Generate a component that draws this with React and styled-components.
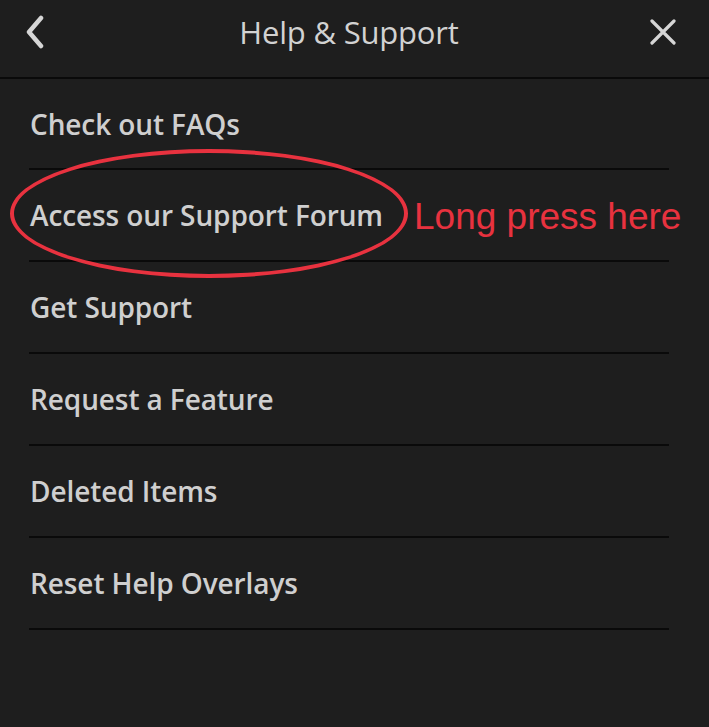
import React from 'react'
import styled, { createGlobalStyle } from 'styled-components'

const GlobalStyle = createGlobalStyle`
  html, body {
    margin: 0;
    padding: 0;
    background: #1e1e1e;
  }
`

const items = [
  'Check out FAQs',
  'Access our Support Forum',
  'Get Support',
  'Request a Feature',
  'Deleted Items',
  'Reset Help Overlays',
]

const App = () => {
  return (
    <Screen>
      <GlobalStyle />
      <Header>
        <IconButton aria-label="back">
          <svg width="22" height="34" viewBox="0 0 22 34">
            <path d="M17 3 L5 17 L17 31" fill="none" stroke="#d6d6d6" strokeWidth="4.5" strokeLinecap="round" strokeLinejoin="round" />
          </svg>
        </IconButton>
        <Title>Help &amp; Support</Title>
        <IconButton aria-label="close">
          <svg width="26" height="26" viewBox="0 0 26 26">
            <path d="M2 2 L24 24 M24 2 L2 24" fill="none" stroke="#d6d6d6" strokeWidth="3.2" strokeLinecap="round" />
          </svg>
        </IconButton>
      </Header>
      <List>
        {items.map((label, index) => (
          <Row key={index}>
            <Label>{label}</Label>
            {index === 1 && (
              <>
                <Circle />
                <Note>Long press here</Note>
              </>
            )}
          </Row>
        ))}
      </List>
    </Screen>
  )
}

export default App

const Screen = styled.div`
  width: 709px;
  height: 727px;
  background: #1e1e1e;
  overflow: hidden;
  font-family: "Open Sans", "Noto Sans", sans-serif;
`

const Header = styled.div`
  height: 79px;
  border-bottom: 2px solid #0a0a0a;
  box-sizing: border-box;
  display: flex;
  align-items: center;
  justify-content: space-between;
  padding: 0 33px 13px 22px;
`

const IconButton = styled.div`
  display: flex;
  align-items: center;
  justify-content: center;
  width: 26px;
  height: 34px;
`

const Title = styled.div`
  color: #d2d2d2;
  font-size: 31px;
  font-weight: 400;
  letter-spacing: -0.2px;
`

const List = styled.div`
  display: flex;
  flex-direction: column;
  padding: 0 40px 0 29px;
`

const Row = styled.div`
  position: relative;
  height: 92px;
  border-bottom: 2px solid #0a0a0a;
  box-sizing: border-box;
  display: flex;
  align-items: center;
  padding-left: 1px;
  &:first-child {
    height: 91px;
  }
`

const Label = styled.div`
  color: #cfcfcf;
  font-size: 28px;
  font-weight: 600;
  letter-spacing: -0.1px;
`

const Circle = styled.div`
  position: absolute;
  left: -19px;
  top: -21px;
  width: 398px;
  height: 129px;
  border: 4px solid #e8323f;
  border-radius: 50%;
  box-sizing: border-box;
`

const Note = styled.div`
  position: absolute;
  left: 385px;
  top: 50%;
  transform: translateY(-46%);
  color: #e8323f;
  font-family: "Liberation Sans", Arial, sans-serif;
  font-size: 37px;
  white-space: nowrap;
`
